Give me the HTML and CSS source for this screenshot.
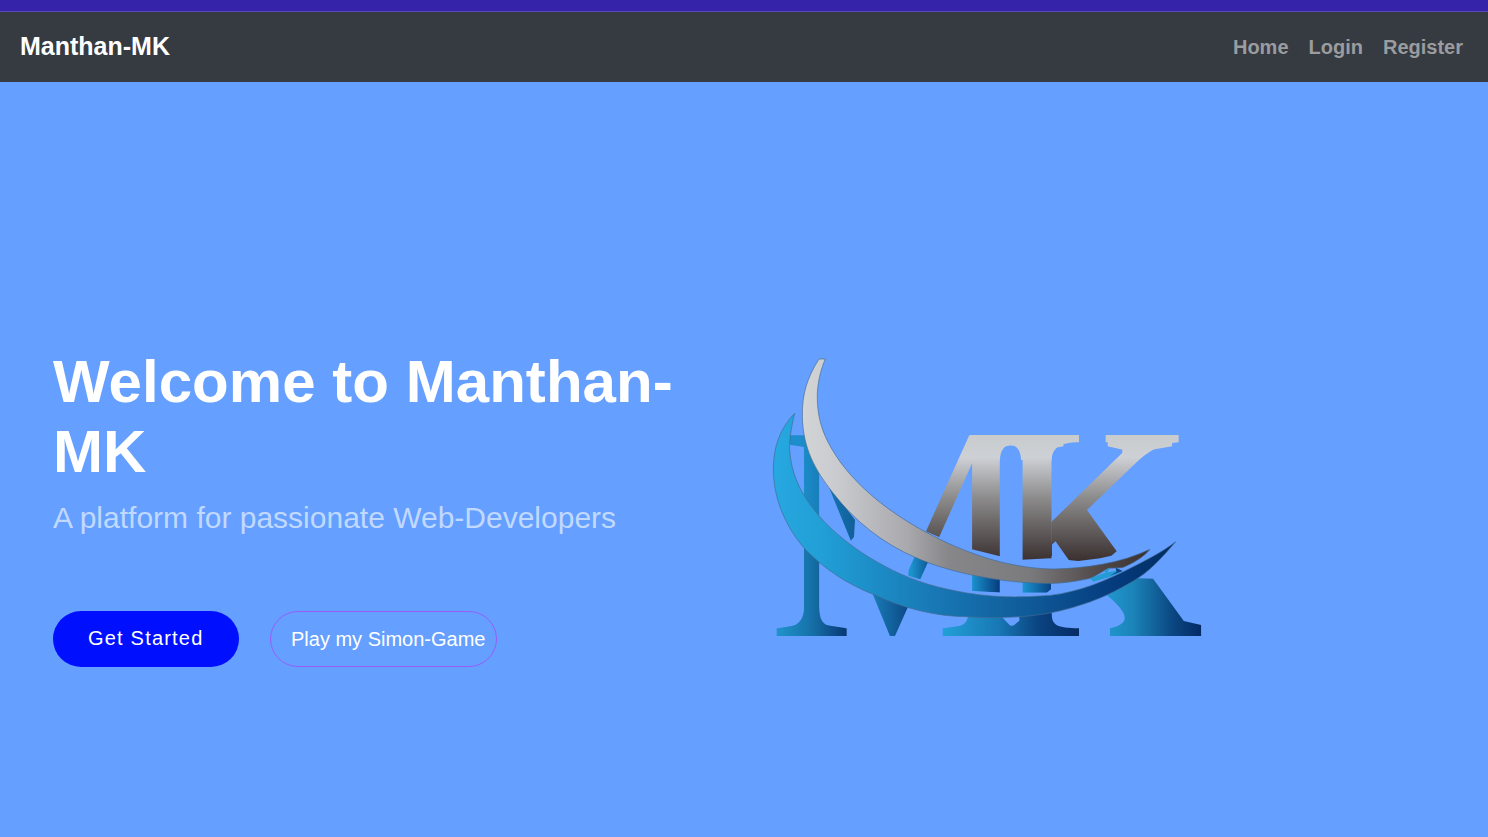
FILE: index.html
```html
<!DOCTYPE html>
<html lang="en">
<head>
<meta charset="utf-8">
<title>Manthan-MK</title>
<link rel="stylesheet" href="styles.css">
</head>
<body>
<div class="top-strip"></div>
<nav class="navbar">
  <a class="brand">Manthan-MK</a>
  <div class="nav-links"><a>Home</a><a>Login</a><a>Register</a></div>
</nav>
<main class="hero">
  <section class="intro">
    <h1>Welcome to Manthan-MK</h1>
    <p>A platform for passionate Web-Developers</p>
    <div class="actions">
      <a class="btn btn-start">Get Started</a>
      <a class="btn btn-game">Play my Simon-Game</a>
    </div>
  </section>
  <svg class="logo" viewBox="0 0 1350 900" role="img" aria-label="MK logo">
    <defs>
      <linearGradient id="steel" gradientUnits="userSpaceOnUse" x1="0" y1="255" x2="0" y2="630">
        <stop offset="0" stop-color="#c9cccd"/><stop offset=".18" stop-color="#cdd0d5"/><stop offset=".5" stop-color="#8d8c8d"/><stop offset="1" stop-color="#3b3130"/>
      </linearGradient>
      <linearGradient id="arc-steel" gradientUnits="userSpaceOnUse" x1="127" y1="0" x2="1170" y2="0">
        <stop offset="0" stop-color="#d3d4d5"/><stop offset=".1" stop-color="#c9cbcf"/><stop offset=".3" stop-color="#aaa9ad"/><stop offset=".42" stop-color="#87878a"/><stop offset=".65" stop-color="#7b7b7d"/><stop offset=".85" stop-color="#51494a"/><stop offset="1" stop-color="#3b302f"/>
      </linearGradient>
      <linearGradient id="arc-blue" gradientUnits="userSpaceOnUse" x1="40" y1="0" x2="1247" y2="0">
        <stop offset="0" stop-color="#27a8e0"/><stop offset=".12" stop-color="#219fd6"/><stop offset=".4" stop-color="#1878b5"/><stop offset=".62" stop-color="#105c9a"/><stop offset=".85" stop-color="#053b7d"/><stop offset="1" stop-color="#032c61"/>
      </linearGradient>
      <linearGradient id="feet" gradientUnits="userSpaceOnUse" x1="0" y1="0" x2="1350" y2="0">
        <stop offset=".037" stop-color="#2094cc"/><stop offset=".115" stop-color="#1670a8"/><stop offset=".193" stop-color="#083875"/>
        <stop offset=".24" stop-color="#1b83bd"/><stop offset=".335" stop-color="#0b4582"/>
        <stop offset=".4" stop-color="#23a1d9"/><stop offset=".53" stop-color="#1878b5"/><stop offset=".62" stop-color="#0a4380"/><stop offset=".71" stop-color="#052b65"/>
        <stop offset=".74" stop-color="#23a1d9"/><stop offset=".83" stop-color="#1b83b8"/><stop offset=".92" stop-color="#0a4580"/><stop offset=".98" stop-color="#042b66"/>
      </linearGradient>
      <linearGradient id="bits" gradientUnits="userSpaceOnUse" x1="0" y1="0" x2="1350" y2="0">
        <stop offset=".09" stop-color="#1d8ecb"/><stop offset=".14" stop-color="#167bb6"/><stop offset=".21" stop-color="#115f99"/>
        <stop offset=".335" stop-color="#1c94cc"/><stop offset=".375" stop-color="#0d5897"/>
        <stop offset=".466" stop-color="#1c9ad5"/><stop offset=".53" stop-color="#073f80"/>
        <stop offset=".58" stop-color="#1c9ad5"/><stop offset=".65" stop-color="#073f80"/>
      </linearGradient>
      <clipPath id="above"><path d="M480 200H1350V540L1170 520 1054 617 1020 625 955 633 870 625 785 629 717 618 630 596 542 563 490 541Z"/></clipPath>
      <clipPath id="below"><path d="M0 560H100L200 655 480 760 760 780 1000 730 1125 685 1350 690V900H0Z"/></clipPath>
      <clipPath id="between"><path d="M60 200H150L225 430 285 510 282 560 265 582 255 560H175V500L120 430 88 300V272ZM450 600H520L505 650 488 690 445 677ZM610 650H735V728L630 722ZM770 670H873V718L860 728H770Z"/></clipPath>
      <clipPath id="k-stem"><rect x="600" y="200" width="276" height="700"/></clipPath>
      <clipPath id="k-arms"><rect x="874" y="200" width="476" height="440"/></clipPath>
      <clipPath id="k-foot"><rect x="1000" y="640" width="350" height="260"/></clipPath>
      <mask id="letters" maskUnits="userSpaceOnUse" x="0" y="0" width="1350" height="900">
        <g class="mark">
          <text transform="translate(32 858) scale(.963 1)">M</text>
          <g clip-path="url(#k-stem)"><text transform="translate(684 858)">K</text></g>
          <g clip-path="url(#k-arms)"><text class="heavy" transform="translate(618 870) scale(.937 1.02)">K</text></g>
          <g clip-path="url(#k-foot)"><text class="heavy" transform="translate(668 858) scale(.925 1)">K</text></g>
        </g>
        <g fill="#fff">
          <path d="M630 255H957V277C905 277 877 290 875 330H783C783 270 720 270 720 330H690Z"/>
          <path d="M1037 255H1256V277C1200 279 1160 310 1130 335L1080 330C1095 300 1090 277 1037 277Z"/>
          <path d="M133 770H177C180 815 185 833 260 835V858H50V835C115 833 130 815 133 770Z"/>
          <path d="M625 790H725V800L755 832 778 812V790H875C875 825 890 835 957 835V858H548V835C610 833 622 823 625 790Z"/>
          <path d="M1200 690L1120 693 1040 735C1100 785 1120 820 1050 835V858H1320V835C1260 820 1210 790 1120 693Z"/>
        </g>
      </mask>
    </defs>
    <g clip-path="url(#above)"><rect width="1350" height="900" fill="url(#steel)" mask="url(#letters)"/></g>
    <g clip-path="url(#below)"><rect width="1350" height="900" fill="url(#feet)" mask="url(#letters)"/></g>
    <g clip-path="url(#between)"><rect width="1350" height="900" fill="url(#bits)" mask="url(#letters)"/></g>
    <path class="edge" fill="url(#arc-blue)" d="M104 190C60 235 40 290 40 360C41 450 80 535 135 597C190 655 265 705 345 735C430 775 530 800 620 800C710 806 800 803 880 787C1000 760 1055 730 1120 693C1165 667 1205 625 1247 575C1210 605 1140 640 1090 665C1010 705 920 736 840 738C740 745 650 738 560 717C480 700 410 670 350 635C300 608 220 550 175 495C120 430 95 370 90 310C86 280 92 240 104 190Z"/>
    <path class="edge" fill="url(#arc-steel)" d="M177 27C140 85 126 135 127 200C129 295 165 360 220 430C285 515 370 580 465 622C555 662 700 697 850 700C900 702 950 694 995 684L1045 655 1087 653C1120 640 1150 622 1170 598C1080 640 980 655 880 657C740 655 610 607 495 545C410 499 310 430 240 335C195 270 170 215 172 130C174 90 184 55 196 27Z"/>
    <path fill="#249bd3" d="M990 685L1040 667 1028 664 1050 655 1042 667 1067 663 1068 653 1088 663 1055 679 1000 695Z"/>
    <path fill="#0c4484" d="M1067 653L1088 663 1050 677 1070 665Z"/>
  </svg>
</main>
</body>
</html>
```
FILE: styles.css
```css
* { box-sizing: border-box; }
body { margin: 0; height: 837px; overflow: hidden; display: flex; flex-direction: column; background: #659fff; font-family: "Liberation Sans", Arial, sans-serif; }
.top-strip { height: 12px; background: #3523a9; border-bottom: 1px solid #594bb4; }
.navbar { height: 70px; padding: 0 25px 0 20px; display: flex; align-items: center; justify-content: space-between; background: #363a41; font-weight: bold; }
.brand { padding-bottom: 2px; font-size: 25px; color: #fff; }
.nav-links { display: flex; gap: 20px; font-size: 20px; color: #9a9c9f; }
.hero { flex: 1; display: flex; align-items: flex-start; padding: 264px 0 0 53px; }
.intro { width: 707px; flex: none; }
h1 { margin: 0; padding-top: 1px; width: 660px; font-size: 60px; line-height: 70px; letter-spacing: .04px; color: #fff; }
p { margin: 13px 0 0; font-size: 30px; line-height: 36px; color: #c1d9ff; }
.actions { display: flex; gap: 31px; margin-top: 75px; }
.btn { height: 56px; border-radius: 28px; font-size: 20px; color: #fff; white-space: nowrap; }
.btn-start { width: 186px; padding-left: 35px; line-height: 54px; letter-spacing: 1.2px; background: #0010ff; }
.btn-game { width: 227px; padding-left: 20px; line-height: 54px; border: 1px solid #965dfa; }
.logo { width: 450px; height: 300px; margin-top: 4px; flex: none; }
.mark { font-family: "Liberation Serif", "Times New Roman", serif; font-size: 920px; fill: #fff; }
.heavy { font-weight: bold; }
.edge { stroke: #426b91; stroke-width: 2; }
```
